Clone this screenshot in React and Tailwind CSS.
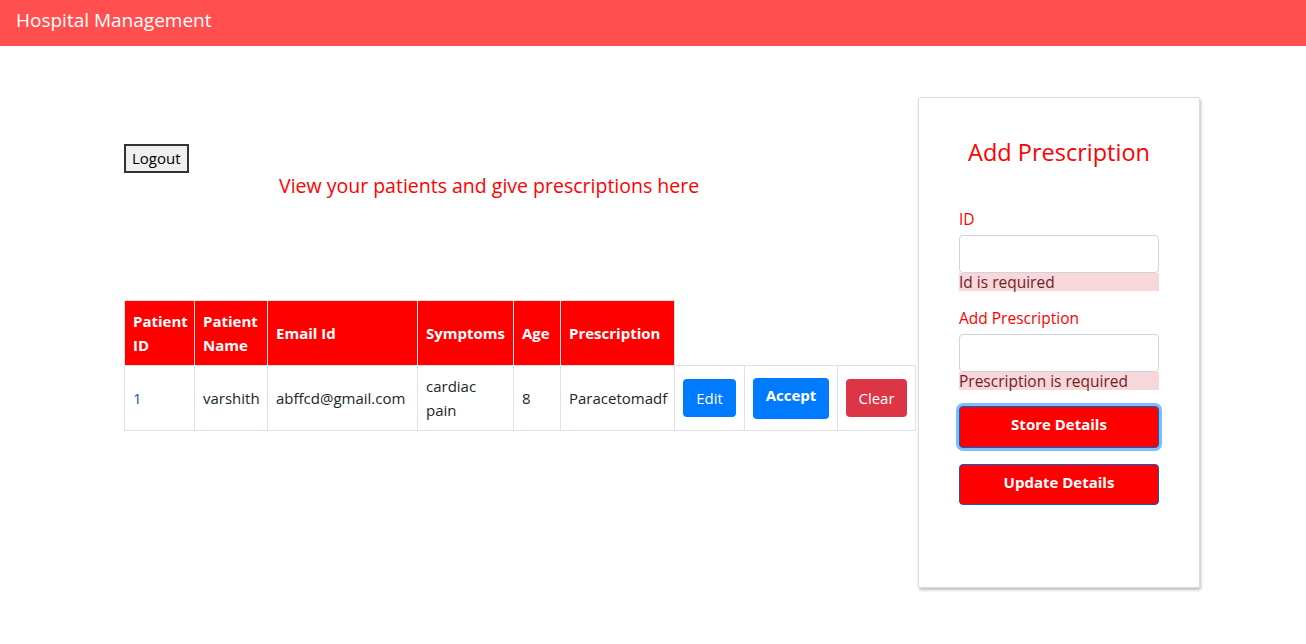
export default function App() {
  const font = { fontFamily: '"Open Sans", "Noto Sans", sans-serif' };
  const th = "bg-[#ff0000] text-white font-bold text-left align-middle px-[8px] border border-[#dee2e6]";
  const td = "border border-[#dee2e6] px-[8px] align-middle";
  return (
    <div className="min-h-[644px] bg-white text-[#212529]" style={font}>
      {/* Header */}
      <div className="h-[46px] bg-[#ff4f4f] flex items-center px-4 pb-[6px]">
        <span className="text-white text-[19px]">Hospital Management</span>
      </div>

      <div className="flex">
        {/* Left part */}
        <div className="pl-[124px] pt-[98px] w-[918px] shrink-0">
          <button className="border-2 border-[#333] bg-[#efefef] px-[6px] h-[29px] text-[15px] text-black leading-none">
            Logout
          </button>
          <div className="pl-[155px] text-[#ff0000] text-[19.5px] leading-[26px]">
            View your patients and give prescriptions here
          </div>

          <table className="mt-[101px] border-collapse table-fixed w-[791px] text-[15px] leading-6">
            <colgroup>
              <col className="w-[70px]" />
              <col className="w-[73px]" />
              <col className="w-[150px]" />
              <col className="w-[96px]" />
              <col className="w-[47px]" />
              <col className="w-[114px]" />
              <col className="w-[70px]" />
              <col className="w-[93px]" />
              <col className="w-[78px]" />
            </colgroup>
            <thead>
              <tr className="h-[65px]">
                <th className={th}>Patient ID</th>
                <th className={th}>Patient Name</th>
                <th className={th}>Email Id</th>
                <th className={th}>Symptoms</th>
                <th className={th}>Age</th>
                <th className={th}>Prescription</th>
              </tr>
            </thead>
            <tbody>
              <tr className="h-[65px]">
                <td className={`${td} text-[#0b5fa5]`}>1</td>
                <td className={td}>varshith</td>
                <td className={td}>abffcd@gmail.com</td>
                <td className={td}>
                  cardiac
                  <br />
                  pain
                </td>
                <td className={td}>8</td>
                <td className={td}>Paracetomadf</td>
                <td className={td}>
                  <button className="bg-[#007bff] text-white rounded w-[53px] h-[38px] text-[15px]">Edit</button>
                </td>
                <td className={td}>
                  <button className="bg-[#007bff] text-white rounded w-[76px] h-[41px] text-[15px] font-bold leading-none pb-[5px]">
                    Accept
                  </button>
                </td>
                <td className={td}>
                  <button className="bg-[#dc3545] text-white rounded w-[61px] h-[38px] text-[15px]">Clear</button>
                </td>
              </tr>
            </tbody>
          </table>
        </div>

        {/* Right card */}
        <div className="mt-[51px] w-[282px] h-[491px] border border-[#dcdcdc] rounded-[2px] shadow-[1px_2px_3px_rgba(0,0,0,0.25)] px-[40px]">
          <div className="text-center text-[#ff0000] text-[23.5px] leading-8 mt-[38px]">Add Prescription</div>

          <div className="mt-[39px] text-[#ff0000] text-[15.5px] leading-6">ID</div>
          <input className="mt-[4px] block w-[200px] h-[38px] border border-[#ced4da] rounded" />
          <div className="w-[200px] bg-[#f8d7da] text-[#721c24] text-[15.5px] leading-[18px] h-[18px]">Id is required</div>

          <div className="mt-[15px] text-[#ff0000] text-[15.5px] leading-6">Add Prescription</div>
          <input className="mt-[4px] block w-[200px] h-[38px] border border-[#ced4da] rounded" />
          <div className="w-[200px] bg-[#f8d7da] text-[#721c24] text-[15.5px] leading-[18px] h-[18px]">
            Prescription is required
          </div>

          <button className="mt-[16px] block w-[200px] h-[42px] bg-[#ff0000] border border-[#0062cc] rounded text-white font-bold text-[15px] ring-[3px] ring-[#80bdff] pb-[5px]">
            Store Details
          </button>
          <button className="mt-[16px] block w-[200px] h-[41px] bg-[#ff0000] border border-[#0062cc] rounded text-white font-bold text-[15px] pb-[5px]">
            Update Details
          </button>
        </div>
      </div>
    </div>
  );
}
